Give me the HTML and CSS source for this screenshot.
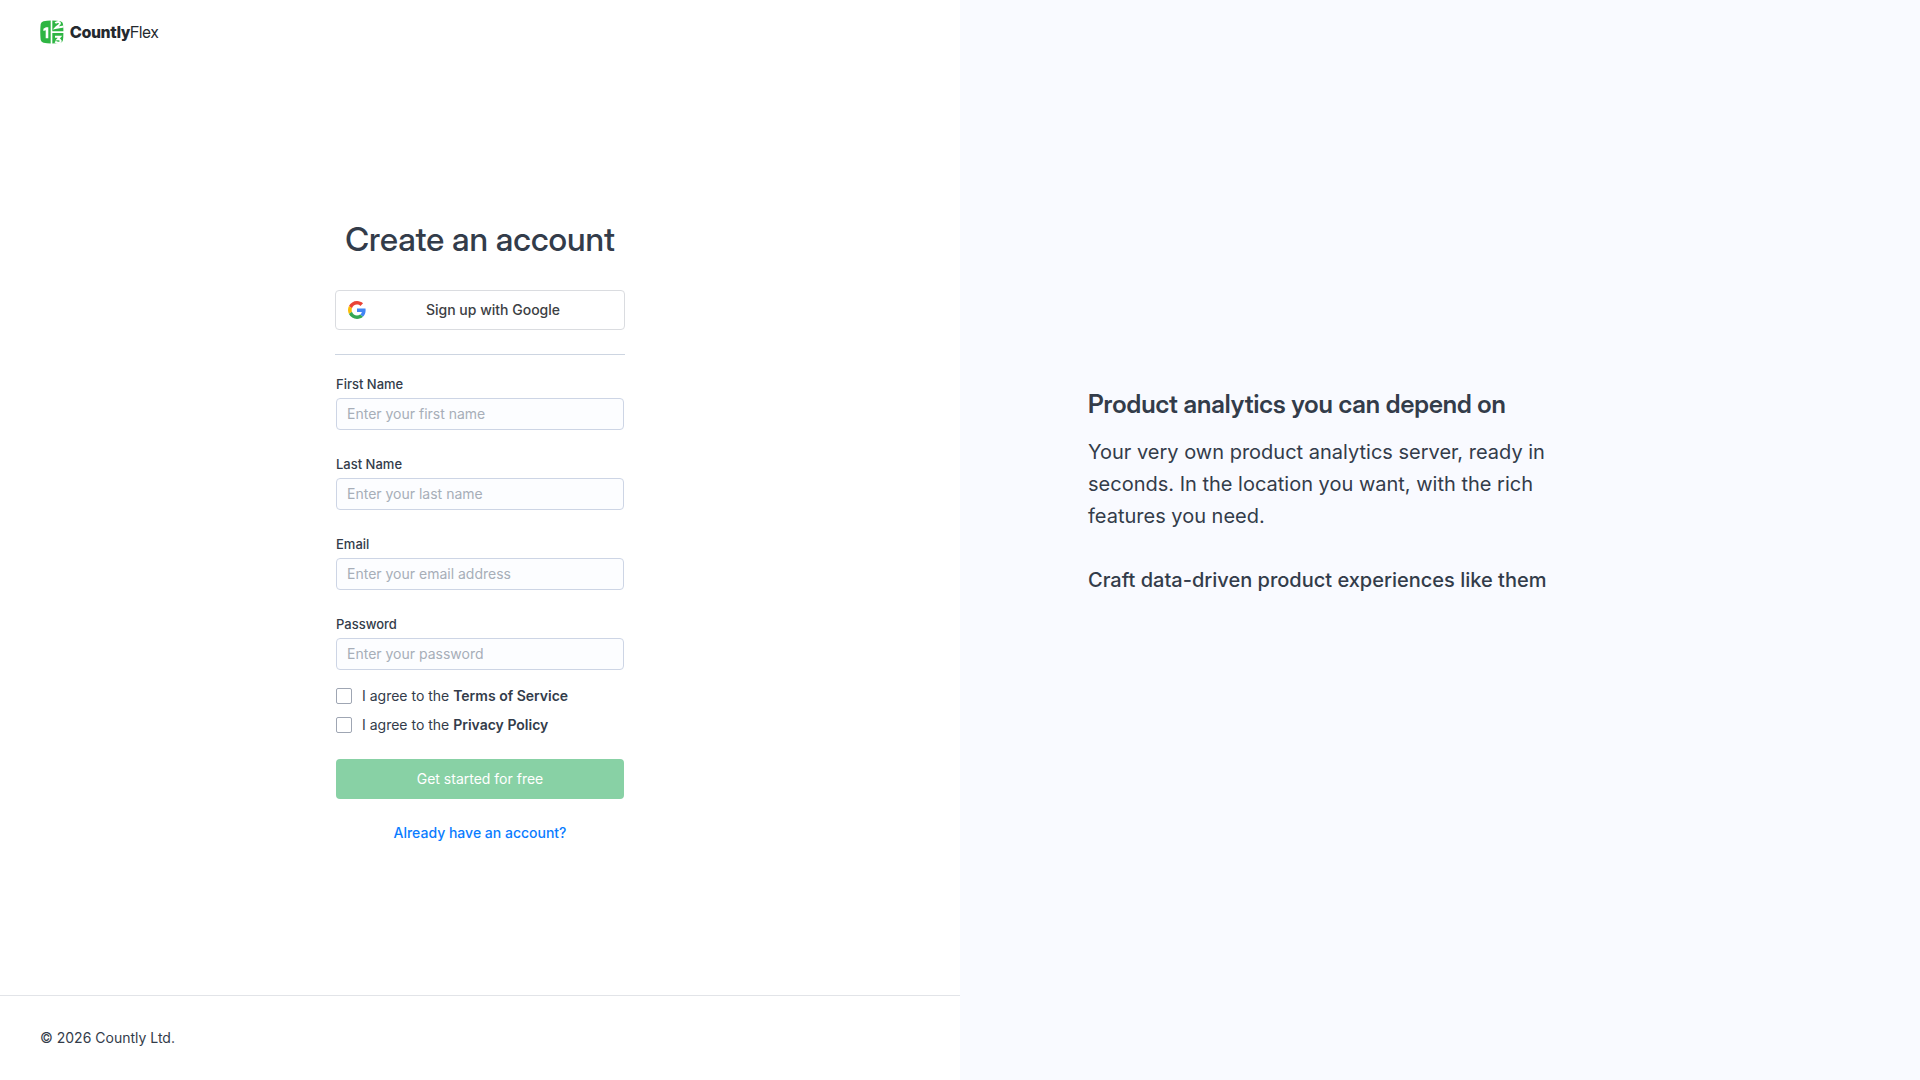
FILE: index.html
```html
<!DOCTYPE html>
<html lang="en">
<head>
    <meta charset="UTF-8">
    <meta name="viewport" content="width=device-width, initial-scale=1.0">
    <title>Countly Flex - Create an account</title>
    <link rel="stylesheet" href="styles.css">
</head>
<body>
    <div class="page">
        <div class="signup">
            <header class="header">
                <a href="#" class="logo">
                    <svg class="logo-mark" viewBox="0 0 24 24" aria-hidden="true">
                        <path fill="#2eb543" d="M3.500 1.200Q7 .5 10.700 .5V23.500Q7 23.500 3.500 22.800Q1.300 22.300 .7 20Q-.2 12 .7 4Q1.300 1.700 3.500 1.200Z"/>
                        <path fill="#2eb543" d="M12.300 .5Q17 .5 20.500 1.200Q22.700 1.700 23 4Q23.400 7.500 23.400 11.300H12.300Z"/>
                        <path fill="#2eb543" d="M12.300 13H23.400Q23.400 16.500 23 20Q22.700 22.300 20.500 22.800Q17 23.500 12.300 23.500Z"/>
                        <path fill="#fff" d="M6 7.200H8.300V18.200H5.700V10.300L3.400 11.100V8.800Z"/>
                        <path fill="none" stroke="#fff" stroke-width="2" d="M15.300 3.200C17 1.300 20.200 1.600 19.900 3.600C19.600 5 17.500 6 15.600 8L23.600 6.600"/>
                        <path fill="none" stroke="#fff" stroke-width="2" d="M15 16.800H20L17.800 19.200C21 18.900 21.500 21.800 19.500 22.500C18 22.900 16.600 22.600 15.200 21.600"/>
                    </svg>
                    <span class="logo-text"><b>Countly</b>Flex</span>
                </a>
            </header>

            <main class="main">
                <form class="form">
                    <h1>Create an account</h1>

                    <button type="button" class="google-button">
                        <svg class="google-icon" viewBox="0 0 48 48" aria-hidden="true">
                            <path fill="#EA4335" d="M24 9.500c3.540 0 6.710 1.220 9.210 3.600l6.850-6.850C35.900 2.380 30.470 0 24 0 14.620 0 6.510 5.380 2.560 13.220l7.980 6.190C12.430 13.720 17.740 9.500 24 9.500z"/>
                            <path fill="#4285F4" d="M46.980 24.550c0-1.570-.15-3.090-.38-4.550H24v9.020h12.940c-.58 2.960-2.260 5.480-4.780 7.180l7.730 6c4.510-4.180 7.090-10.360 7.090-17.650z"/>
                            <path fill="#FBBC05" d="M10.530 28.590c-.48-1.450-.76-2.990-.76-4.590s.27-3.140.76-4.590l-7.980-6.190C.92 16.460 0 20.120 0 24c0 3.880.92 7.540 2.560 10.780l7.970-6.190z"/>
                            <path fill="#34A853" d="M24 48c6.480 0 11.930-2.130 15.890-5.810l-7.730-6c-2.150 1.450-4.920 2.300-8.160 2.300-6.260 0-11.570-4.220-13.470-9.910l-7.980 6.190C6.510 42.620 14.620 48 24 48z"/>
                        </svg>
                        <span>Sign up with Google</span>
                    </button>

                    <hr>

                    <div class="field">
                        <label for="first-name">First Name</label>
                        <input type="text" id="first-name" placeholder="Enter your first name">
                    </div>
                    <div class="field">
                        <label for="last-name">Last Name</label>
                        <input type="text" id="last-name" placeholder="Enter your last name">
                    </div>
                    <div class="field">
                        <label for="email">Email</label>
                        <input type="email" id="email" placeholder="Enter your email address">
                    </div>
                    <div class="field">
                        <label for="password">Password</label>
                        <input type="password" id="password" placeholder="Enter your password">
                    </div>

                    <div class="agreements">
                        <div class="agree">
                            <input type="checkbox" id="terms">
                            <label for="terms">I agree to the <a href="#">Terms of Service</a></label>
                        </div>
                        <div class="agree">
                            <input type="checkbox" id="privacy">
                            <label for="privacy">I agree to the <a href="#">Privacy Policy</a></label>
                        </div>
                    </div>

                    <button type="submit" class="submit-button" disabled>Get started for free</button>
                    <a href="#" class="login-link">Already have an account?</a>
                </form>
            </main>

            <footer class="footer">© 2026 Countly Ltd.</footer>
        </div>

        <aside class="promo">
            <div class="promo-content">
                <h2>Product analytics you can depend on</h2>
                <p>Your very own product analytics server, ready in seconds. In the location you want, with the rich features you need.</p>
                <h3>Craft data-driven product experiences like them</h3>
            </div>
        </aside>
    </div>
</body>
</html>
```
FILE: styles.css
```css
* {
    box-sizing: border-box;
}
body {
    margin: 0;
    font-family: Inter, sans-serif;
    font-size: 14px;
    line-height: 20px;
    color: #333c4a;
    background-color: #fff;
}
a {
    color: inherit;
    text-decoration: none;
}
h1, h2, h3, p {
    margin: 0;
}
.page {
    display: grid;
    grid-template-columns: 1fr 1fr;
    min-height: 100vh;
}

/* Left side */
.signup {
    display: flex;
    flex-direction: column;
}
.header {
    display: flex;
    padding: 20px 40px;
}
.logo {
    display: flex;
    align-items: center;
    gap: 6px;
    color: #24292e;
}
.logo-mark {
    width: 24px;
    height: 24px;
}
.logo-text {
    font-family: "Inter Display", Inter, sans-serif;
    font-size: 16px;
    font-weight: 400;
    line-height: 24px;
}
.logo-text b {
    font-weight: 800;
}
.main {
    flex: 1;
    display: flex;
    align-items: center;
    justify-content: center;
    padding-top: 3px;
}
.form {
    display: flex;
    flex-direction: column;
    width: 288px;
}
h1 {
    font-family: "Inter Display", Inter, sans-serif;
    font-size: 33px;
    font-weight: 500;
    line-height: 38px;
    text-align: center;
    white-space: nowrap;
}
.google-button {
    display: flex;
    align-items: center;
    height: 40px;
    margin: 32px -1px 0;
    padding: 0 12px;
    font-family: inherit;
    font-size: 14px;
    font-weight: 500;
    color: #3c4043;
    background-color: #fff;
    border: 1px solid #dadce0;
    border-radius: 4px;
    cursor: pointer;
}
.google-button span {
    flex: 1;
    padding-left: 8px;
}
.google-icon {
    width: 18px;
    height: 18px;
}
hr {
    width: 290px;
    margin: 24px -1px 19px;
    border: none;
    border-top: 1px solid #cdd5e1;
}
.field {
    display: flex;
    flex-direction: column;
    gap: 4px;
    margin-bottom: 24px;
}
.field label {
    font-size: 13px;
    font-weight: 500;
}
.field input {
    height: 32px;
    padding: 0 10px;
    font-family: inherit;
    font-size: 14px;
    color: inherit;
    background-color: #fcfdff;
    border: 1px solid #cdd5e5;
    border-radius: 4px;
}
.field input::placeholder {
    color: #a7aeb8;
}
.agreements {
    display: flex;
    flex-direction: column;
    gap: 9px;
    margin-top: -8px;
}
.agree {
    display: flex;
    align-items: center;
    gap: 10px;
}
.agree input {
    appearance: none;
    width: 16px;
    height: 16px;
    margin: 0;
    background-color: #fff;
    border: 1px solid #9fa6b3;
    border-radius: 2px;
}
.agree input:checked {
    background-color: #12af51;
}
.agree a {
    font-weight: 600;
}
.submit-button {
    height: 40px;
    margin-top: 24px;
    font-family: inherit;
    font-size: 14px;
    color: #fff;
    background-color: #88d1a5;
    border: none;
    border-radius: 4px;
}
.login-link {
    align-self: center;
    margin-top: 24px;
    font-weight: 500;
    color: #0a7cff;
}
.footer {
    padding: 32px 40px;
    border-top: 1px solid #e2e4e8;
}

/* Right side */
.promo {
    display: flex;
    align-items: center;
    padding: 0 128px 96px;
    background-color: #f9faff;
}
.promo-content {
    max-width: 480px;
}
h2 {
    font-family: "Inter Display", Inter, sans-serif;
    font-size: 25px;
    font-weight: 600;
    line-height: 32px;
}
.promo-content p {
    margin: 16px 0 32px;
    font-size: 20px;
    line-height: 32px;
}
h3 {
    font-size: 20px;
    font-weight: 500;
    line-height: 32px;
}
```
